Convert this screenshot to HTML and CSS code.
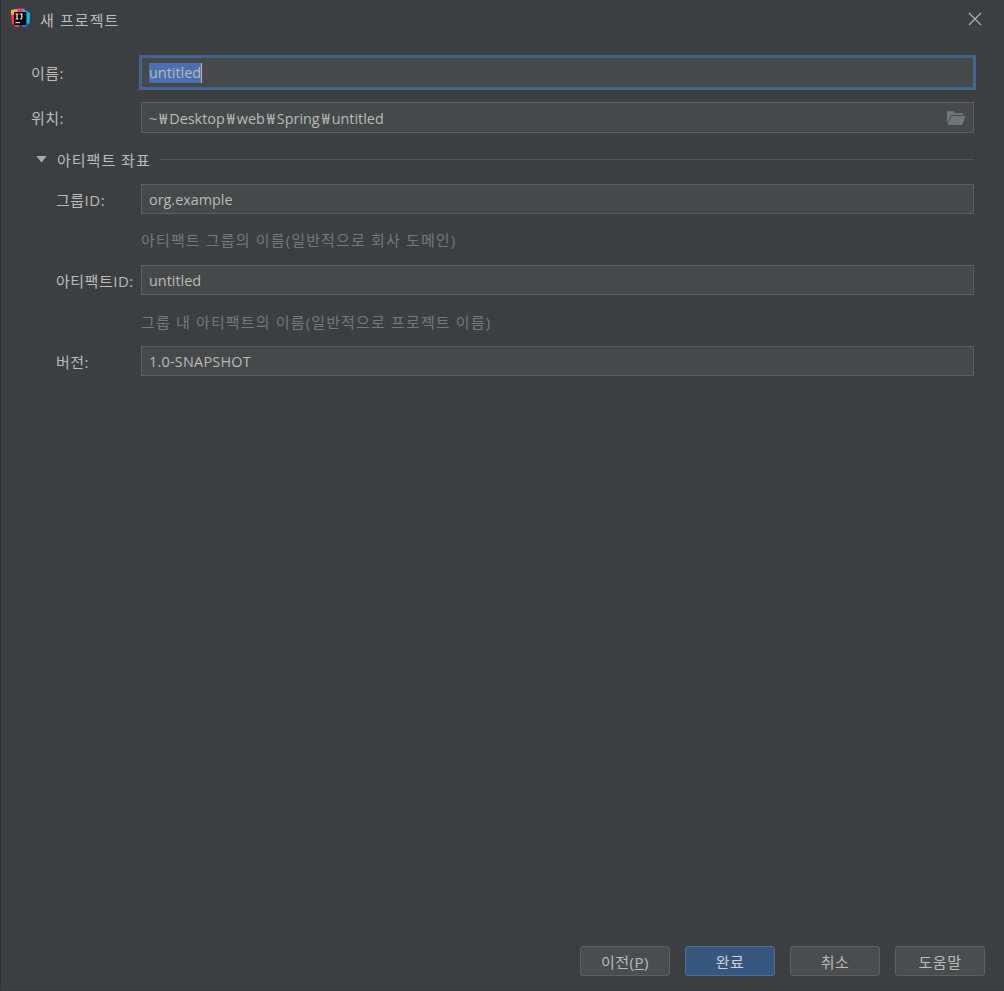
FILE: index.html
```html
<!DOCTYPE html>
<html lang="ko">
<head>
<meta charset="utf-8">
<title>새 프로젝트</title>
<link rel="stylesheet" href="styles.css">
</head>
<body>
<div class="dialog">
  <header class="titlebar">
    <svg class="logo" width="20" height="20" viewBox="0 0 20 20">
      <path d="M1 2 L10 0.5 L12 4 L5 9 L1 8 Z" fill="#fbb02a"/>
      <path d="M1 7 L5 6 L6 18 L2 16 Z" fill="#fe2857"/>
      <path d="M3 13 L10 13 L9 19 L5 19 Z" fill="#fc318c"/>
      <path d="M7 1 L15 0.5 L14 6 L8 6 Z" fill="#fe2fa5"/>
      <path d="M13 1 L20 5 L19.5 15 L15 19 L12 14 Z" fill="#07c3f2"/>
      <path d="M12 16 L19 15 L15 19 L12 19 Z" fill="#087cfa"/>
      <rect x="4" y="4" width="12.5" height="13" fill="#000"/>
      <rect x="5.3" y="14.2" width="4.8" height="1" fill="#fff"/>
      <path d="M5.5 6 H8.4 M7 6 V11 M5.5 11 H8.4 M9.8 6 H12.8 M11.8 6 V10.2 Q11.8 11 10.8 11 H9.8" stroke="#fff" stroke-width="1.1" fill="none"/>
    </svg>
    <span class="title">새 프로젝트</span>
    <svg class="close" width="14" height="14" viewBox="0 0 14 14">
      <path d="M1 1 L13 13 M13 1 L1 13" stroke="#b4b6b8" stroke-width="1.1" fill="none"/>
    </svg>
  </header>

  <main class="form">
    <div class="row row-name">
      <label class="label">이름:</label>
      <div class="field field-focus"><span class="selected">untitled</span><span class="caret"></span></div>
    </div>
    <div class="row row-location">
      <label class="label">위치:</label>
      <div class="field field-browse">
        <span>~<span class="won">₩</span>Desktop<span class="won">₩</span>web<span class="won">₩</span>Spring<span class="won">₩</span>untitled</span>
        <svg class="folder" width="20" height="16" viewBox="0 0 20 16">
          <path d="M1 1 H7 L9 3 H17 V5 H5 L1 14 Z" fill="#6e7678"/>
          <path d="M5.5 6 H19.5 L16 15 H1.5 Z" fill="#6e7678"/>
        </svg>
      </div>
    </div>
    <div class="section">
      <svg class="arrow" width="11" height="7" viewBox="0 0 12 8"><path d="M0 0 H12 L6 7.5 Z" fill="#a9abad"/></svg>
      <span class="section-title">아티팩트 좌표</span>
      <span class="rule"></span>
    </div>
    <div class="row row-sub row-group">
      <label class="label">그룹ID:</label>
      <div class="field">org.example</div>
    </div>
    <p class="hint hint-group">아티팩트 그룹의 이름(일반적으로 회사 도메인)</p>
    <div class="row row-sub">
      <label class="label">아티팩트ID:</label>
      <div class="field">untitled</div>
    </div>
    <p class="hint hint-artifact">그룹 내 아티팩트의 이름(일반적으로 프로젝트 이름)</p>
    <div class="row row-sub">
      <label class="label">버전:</label>
      <div class="field field-version">1.0-SNAPSHOT</div>
    </div>
  </main>

  <footer class="actions">
    <button class="btn">이전(<u>P</u>)</button>
    <button class="btn btn-primary">완료</button>
    <button class="btn">취소</button>
    <button class="btn">도움말</button>
  </footer>
</div>
</body>
</html>
```

FILE: styles.css
```css
* { box-sizing: border-box; }
html, body { margin: 0; height: 100%; }
body {
  background: #3c3f41;
  color: #bbbbbb;
  font-family: "Open Sans", "Noto Sans CJK KR", sans-serif;
  font-size: 14.4px;
  overflow: hidden;
}
.dialog {
  height: 991px;
  display: flex;
  flex-direction: column;
  border-left: 1px solid #2f3133;
  border-bottom: 1px solid #323436;
}
.titlebar {
  height: 38px;
  display: flex;
  align-items: center;
  padding: 0 22px 0 9px;
  flex: none;
}
.logo { flex: none; margin-top: -3px; }
.title { margin-left: 10px; font-size: 15px; letter-spacing: 1.1px; color: #bbbbbb; }
.close { margin-left: auto; }
.form { flex: 1; padding: 19px 30px 0 30px; }
.row { display: flex; align-items: center; height: 30px; }
.row-name, .row-location { height: 31px; }
.label {
  width: 110px;
  flex: none;
  color: #bbbbbb;
  white-space: nowrap;
  font-size: 15px;
  letter-spacing: 0.5px;
}
.row-location { margin-top: 14px; }
.row-sub .label { width: 85px; margin-left: 25px; }
.field {
  flex: 1;
  height: 100%;
  display: flex;
  align-items: center;
  padding: 0 7px;
  background: #45494a;
  border: 1px solid #5e6060;
  color: #bbbbbb;
}
.field-focus {
  outline: 2px solid #3f6590;
  border-color: #3f6590;
}
.field-version { letter-spacing: 0.25px; }
.selected { background: #4b6eaf; line-height: 20px; }
.caret { width: 1px; height: 20px; background: #bbbbbb; }
.field-browse { justify-content: space-between; }
.won { padding: 0 2px; }
.folder { flex: none; }
.section {
  display: flex;
  align-items: center;
  height: 20px;
  margin-top: 16px;
  margin-left: 5px;
}
.arrow { flex: none; margin-right: 10px; }
.section-title { white-space: nowrap; font-size: 15px; letter-spacing: 1px; }
.rule { flex: 1; height: 1px; background: #505254; margin-left: 8px; }
.row-group { margin-top: 15px; }
.hint {
  margin: 0;
  padding-left: 110px;
  height: 51px;
  line-height: 20px;
  padding-top: 16px;
  color: #787878;
  white-space: nowrap;
  font-size: 15px;
  letter-spacing: 1.15px;
}
.hint-artifact { padding-top: 17px; }
.actions {
  display: flex;
  justify-content: flex-end;
  gap: 15px;
  padding: 0 19px 14px 0;
  flex: none;
}
.btn {
  width: 90px;
  height: 30px;
  font: inherit;
  font-size: 15px;
  letter-spacing: 0.5px;
  color: #bbbbbb;
  background: #4a4d4f;
  border: 1px solid #5e6060;
  border-radius: 3px;
  padding: 0;
}
.btn-primary {
  background: #365880;
  border-color: #4c708c;
  color: #d0d2d4;
}
```
